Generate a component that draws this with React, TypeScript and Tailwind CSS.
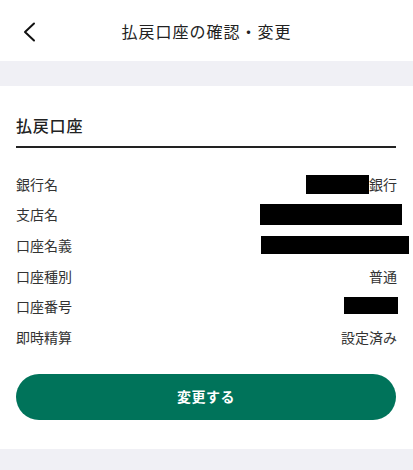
import React from "react";

const rows: { label: string; value?: string; mask?: string; suffix?: string }[] = [
  { label: "銀行名", mask: "w-[63px] h-[19px]", suffix: "銀行" },
  { label: "支店名", mask: "w-[142px] h-[21px] -mr-[5px]" },
  { label: "口座名義", mask: "w-[148px] h-[18px] -mr-[12px]" },
  { label: "口座種別", value: "普通" },
  { label: "口座番号", mask: "w-[54px] h-[17px] -mr-[1px] -mt-[3px]" },
  { label: "即時精算", value: "設定済み" },
];

export default function App() {
  return (
    <div
      className="w-[413px] h-[470px] bg-[#f0f0f5] overflow-hidden text-[#222]"
      style={{ fontFamily: '"Noto Sans CJK JP", "Noto Sans", sans-serif' }}
    >
      {/* Header */}
      <div className="relative h-[61px] bg-white flex items-center justify-center">
        <button className="absolute left-[20px] top-[21px] w-[18px] h-[22px] flex items-center justify-center">
          <svg width="14" height="20" viewBox="0 0 14 20" fill="none">
            <path d="M12 1.5L3 10L12 18.5" stroke="#111" strokeWidth="2" strokeLinecap="round" strokeLinejoin="round" />
          </svg>
        </button>
        <h1 className="text-[16px] font-normal tracking-[1px]">払戻口座の確認・変更</h1>
      </div>

      {/* Card */}
      <div className="mt-[25px] bg-white h-[363px] px-4 pt-[24px]">
        <h2 className="text-[16px] font-medium leading-[30px] tracking-[0.8px]">払戻口座</h2>
        <div className="mt-[6px] h-[2px] bg-[#222] w-[380px]" />

        <div className="mt-[21px] flex flex-col">
          {rows.map((r) => (
            <div key={r.label} className="h-[30.6px] flex items-center justify-between text-[14px] text-[#333]">
              <span>{r.label}</span>
              <span className="flex items-center">
                {r.mask && <span className={`block bg-black ${r.mask}`} />}
                {r.suffix && <span>{r.suffix}</span>}
                {r.value && <span>{r.value}</span>}
              </span>
            </div>
          ))}
        </div>

        <button className="mt-[21px] w-[380px] h-[46px] rounded-full bg-[#00735a] text-white text-[14px] font-bold tracking-[0.5px]">
          変更する
        </button>
      </div>
    </div>
  );
}
